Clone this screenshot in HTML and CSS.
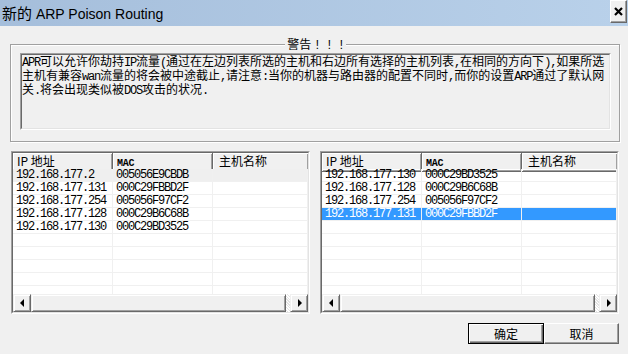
FILE: index.html
```html
<!DOCTYPE html>
<html lang="zh-CN">
  <head>
    <meta charset="UTF-8" />
    <meta name="viewport" content="width=device-width, initial-scale=1.0" />
    <title>新的 ARP Poison Routing</title>
    <link rel="stylesheet" href="styles.css">
  </head>
  <body>
    <div class="window">
      <div class="titlebar">
        <span class="title"><span class="title_cn">新的</span> ARP Poison Routing</span>
        <button class="close_button">
          <svg width="9" height="9" viewBox="0 0 9 9">
            <path d="M1 1 L8 8 M8 1 L1 8" stroke="#000" stroke-width="2.2" />
          </svg>
        </button>
      </div>

      <div class="main">
        <div class="group">
          <div class="group_title">警告 <span class="en bang">! ! !</span></div>
          <div class="warning">
            <div class="warning_inner">
              <span class="en">APR</span>可以允许你劫持<span class="en">IP</span>流量<span class="en">(</span>通过在左边列表所选的主机和右边所有选择的主机列表<span class="en">,</span>在相同的方向下<span class="en">),</span>如果所选<br />
              主机有兼容<span class="en">wan</span>流量的将会被中途截止<span class="en">,</span>请注意<span class="en">:</span>当你的机器与路由器的配置不同时<span class="en">,</span>而你的设置<span class="en">ARP</span>通过了默认网<br />
              关<span class="en">.</span>将会出现类似被<span class="en">DOS</span>攻击的状况<span class="en">.</span>
            </div>
          </div>
        </div>

        <div class="lists">
          <div class="list">
            <div class="list_inner">
              <div class="list_head">
                <div class="hcell">IP 地址</div>
                <div class="hcell"><span class="en en_small">MAC</span></div>
                <div class="hcell hcell3">主机名称</div>
              </div>
              <div class="list_body">
                <div class="row row_hot"><div class="cell en">192.168.177.2</div><div class="cell en">005056E9CBDB</div><div class="cell"></div></div>
                <div class="row"><div class="cell en">192.168.177.131</div><div class="cell en">000C29FBBD2F</div><div class="cell"></div></div>
                <div class="row"><div class="cell en">192.168.177.254</div><div class="cell en">005056F97CF2</div><div class="cell"></div></div>
                <div class="row"><div class="cell en">192.168.177.128</div><div class="cell en">000C29B6C68B</div><div class="cell"></div></div>
                <div class="row"><div class="cell en">192.168.177.130</div><div class="cell en">000C29BD3525</div><div class="cell"></div></div>
                <div class="row"><div class="cell"></div><div class="cell"></div><div class="cell"></div></div>
                <div class="row"><div class="cell"></div><div class="cell"></div><div class="cell"></div></div>
                <div class="row"><div class="cell"></div><div class="cell"></div><div class="cell"></div></div>
                <div class="row"><div class="cell"></div><div class="cell"></div><div class="cell"></div></div>
                <div class="row"><div class="cell"></div><div class="cell"></div><div class="cell"></div></div>
              </div>
              <div class="hscroll">
                <div class="sbtn">
                  <svg width="5" height="9" viewBox="0 0 5 9"><polygon points="4,0 4,8 0,4" fill="#000" /></svg>
                </div>
                <div class="thumb"></div>
                <div class="track"></div>
                <div class="sbtn">
                  <svg width="5" height="9" viewBox="0 0 5 9"><polygon points="1,0 1,8 5,4" fill="#000" /></svg>
                </div>
              </div>
            </div>
          </div>

          <div class="list">
            <div class="list_inner">
              <div class="list_head">
                <div class="hcell">IP 地址</div>
                <div class="hcell"><span class="en en_small">MAC</span></div>
                <div class="hcell hcell3">主机名称</div>
              </div>
              <div class="list_body">
                <div class="row"><div class="cell en">192.168.177.130</div><div class="cell en">000C29BD3525</div><div class="cell"></div></div>
                <div class="row"><div class="cell en">192.168.177.128</div><div class="cell en">000C29B6C68B</div><div class="cell"></div></div>
                <div class="row"><div class="cell en">192.168.177.254</div><div class="cell en">005056F97CF2</div><div class="cell"></div></div>
                <div class="row row_sel"><div class="cell en">192.168.177.131</div><div class="cell en">000C29FBBD2F</div><div class="cell"></div></div>
                <div class="row"><div class="cell"></div><div class="cell"></div><div class="cell"></div></div>
                <div class="row"><div class="cell"></div><div class="cell"></div><div class="cell"></div></div>
                <div class="row"><div class="cell"></div><div class="cell"></div><div class="cell"></div></div>
                <div class="row"><div class="cell"></div><div class="cell"></div><div class="cell"></div></div>
                <div class="row"><div class="cell"></div><div class="cell"></div><div class="cell"></div></div>
                <div class="row"><div class="cell"></div><div class="cell"></div><div class="cell"></div></div>
              </div>
              <div class="hscroll">
                <div class="sbtn">
                  <svg width="5" height="9" viewBox="0 0 5 9"><polygon points="4,0 4,8 0,4" fill="#000" /></svg>
                </div>
                <div class="thumb"></div>
                <div class="track"></div>
                <div class="sbtn">
                  <svg width="5" height="9" viewBox="0 0 5 9"><polygon points="1,0 1,8 5,4" fill="#000" /></svg>
                </div>
              </div>
            </div>
          </div>
        </div>

        <div class="buttons">
          <button class="btn btn_default">确定</button>
          <button class="btn">取消</button>
        </div>
      </div>
    </div>
  </body>
</html>
```

FILE: styles.css
```css
html {
  top: 0;
}
body {
  margin: 0;
  background: #f0f0f0;
  font-family: "Noto Sans CJK SC", sans-serif;
  font-size: 12px;
  color: #000;
}
.window {
  width: 628px;
  height: 354px;
  overflow: hidden;
}
.en {
  font-family: "Liberation Mono", monospace;
  font-size: 12px;
  letter-spacing: -1.2px;
}
.en_small {
  font-size: 10px;
  font-weight: bold;
  letter-spacing: -0.2px;
}

/* title bar */
.titlebar {
  display: flex;
  justify-content: space-between;
  height: 26px;
  background: linear-gradient(to right, #a5bedb, #b9d1ea);
}
.title {
  align-self: center;
  padding-left: 2px;
  font-family: "Liberation Sans", "Noto Sans CJK SC", sans-serif;
  font-size: 14px;
  line-height: 16px;
}
.title_cn {
  font-family: "Noto Sans CJK SC", sans-serif;
  font-size: 15px;
}
.close_button {
  display: flex;
  align-items: center;
  justify-content: center;
  width: 17px;
  height: 23px;
  margin-right: 1px;
  padding: 0;
  background: #f0f0f0;
  border: 1px solid;
  border-color: #fff #696969 #696969 #fff;
  box-shadow: inset -1px -1px #a0a0a0;
}

/* main area */
.main {
  padding: 18px 9px 0 10px;
}
.group {
  width: 591px;
  height: 96px;
  padding: 0 8px 0 9px;
  border: 1px solid #a0a0a0;
  box-shadow: 1px 1px 0 #fff, inset 1px 1px 0 #fff;
}
.group_title {
  width: fit-content;
  height: 14px;
  margin: -8px auto 0;
  padding: 0 2px;
  background: #f0f0f0;
  line-height: 14px;
}
.bang {
  letter-spacing: -1.2px;
}
.warning {
  height: 75px;
  margin-top: 2px;
  border: 1px solid;
  border-color: #a0a0a0 #fff #fff #a0a0a0;
}
.warning_inner {
  height: 73px;
  border: 1px solid;
  border-color: #696969 #e3e3e3 #e3e3e3 #696969;
  line-height: 12px;
  white-space: nowrap;
}

/* list views */
.lists {
  display: flex;
  gap: 10px;
  margin: 9px 0 0 1px;
}
.list {
  width: 297px;
  height: 161px;
  border: 1px solid;
  border-color: #a0a0a0 #fff #fff #a0a0a0;
}
.list_inner {
  display: flex;
  flex-direction: column;
  height: 159px;
  background: #fff;
  border: 1px solid;
  border-color: #696969 #e3e3e3 #e3e3e3 #696969;
}
.list_head {
  display: grid;
  grid-template-columns: 100px 100px 1fr;
  flex-shrink: 0;
  height: 16px;
  background: #f0f0f0;
}
.hcell {
  padding-left: 4px;
  line-height: 15px;
  white-space: nowrap;
  border-right: 1px solid #696969;
  border-bottom: 1px solid #696969;
  box-shadow: inset 1px 1px 0 #fff, inset -1px -1px 0 #a0a0a0;
}
.hcell3 {
  padding-left: 6px;
  border-right: none;
}
.list_body {
  flex-shrink: 0;
  height: 125px;
  overflow: hidden;
}
.row {
  display: grid;
  grid-template-columns: 100px 100px 1fr;
  height: 13px;
}
.cell {
  height: 12px;
  padding-left: 3px;
  line-height: 13px;
  border-right: 1px solid #f0f0f0;
  border-bottom: 1px solid #f0f0f0;
  white-space: nowrap;
}
.row_hot {
  background: #efefef;
}
.row_sel {
  background: #3399ff;
  color: #fff;
}

/* horizontal scroll bar */
.hscroll {
  display: flex;
  flex-shrink: 0;
  height: 18px;
  background: #f0f0f0;
}
.sbtn,
.thumb {
  display: flex;
  align-items: center;
  justify-content: center;
  box-sizing: border-box;
  border: 1px solid;
  border-color: #f0f0f0 #696969 #696969 #f0f0f0;
  box-shadow: inset 1px 1px 0 #fff, inset -1px -1px 0 #a0a0a0;
}
.sbtn {
  width: 18px;
}
.thumb {
  flex: 1;
}
.track {
  width: 4px;
  background: repeating-linear-gradient(45deg, #fff 0 1px, #e3e3e3 1px 2px);
}

/* dialog buttons */
.buttons {
  display: flex;
  justify-content: flex-end;
  margin-top: 9px;
}
.btn {
  height: 21px;
  width: 75px;
  padding: 0;
  background: #f0f0f0;
  font-family: "Noto Sans CJK SC", sans-serif;
  font-size: 12px;
  color: #000;
  border: 1px solid;
  border-color: #fff #696969 #696969 #fff;
  box-shadow: inset -1px -1px 0 #a0a0a0;
}
.btn_default {
  width: 76px;
  border-color: #000;
  box-shadow: inset 1px 1px 0 #fff, inset -1px -1px 0 #696969, inset -2px -2px 0 #a0a0a0;
}
```
